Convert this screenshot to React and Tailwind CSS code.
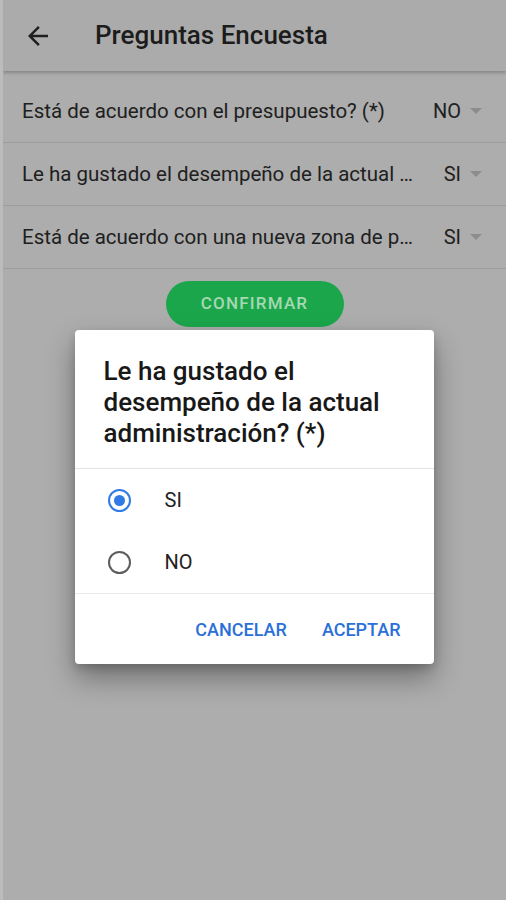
import React from 'react';

const rows = [
  { q: 'Está de acuerdo con el presupuesto? (*)', v: 'NO' },
  { q: 'Le ha gustado el desempeño de la actual administración? (*)', v: 'SI' },
  { q: 'Está de acuerdo con una nueva zona de parqueo? (*)', v: 'SI' },
];

const Caret = () => (
  <svg width="12" height="6" viewBox="0 0 12 6" className="shrink-0">
    <path d="M0 0h12L6 6z" fill="#8c8c8c" />
  </svg>
);

const Radio = ({ checked }) => (
  <span
    className={
      checked
        ? 'w-[23px] h-[23px] rounded-full border-[2.5px] border-[#2f7ae5] flex items-center justify-center'
        : 'w-[23px] h-[23px] rounded-full border-[2.5px] border-[#5c5c5c] flex items-center justify-center'
    }
  >
    {checked && <span className="w-[11px] h-[11px] rounded-full bg-[#2f7ae5]" />}
  </span>
);

export default function App() {
  return (
    <div className="relative w-[506px] h-[900px] bg-[#adadad] overflow-hidden font-['Roboto',sans-serif] border-l-[3px] border-l-[#bcbcbc]">
      {/* app bar */}
      <header className="h-[71px] bg-[#ababab] flex items-center shadow-[0_2px_3px_rgba(0,0,0,0.22)]">
        <svg width="30" height="30" viewBox="0 0 24 24" className="ml-[20px] shrink-0">
          <path d="M20 11H7.83l5.59-5.59L12 4l-8 8 8 8 1.41-1.41L7.83 13H20v-2z" fill="#1e1e1e" />
        </svg>
        <h1 className="ml-[42px] text-[26px] font-medium text-[#1c1c1c]">Preguntas Encuesta</h1>
      </header>

      <main className="pt-[9px]">
        {rows.map((r) => (
          <div key={r.q} className="h-[63px] flex items-center pl-[19px] pr-[24px] border-b border-[#9d9d9d]">
            <span className="flex-1 min-w-0 truncate text-[20.5px] text-[#202020]">{r.q}</span>
            <span className="w-[58px] ml-[8px] flex items-center justify-end gap-[9px]">
              <span className="text-[20px] text-[#202020]">{r.v}</span>
              <Caret />
            </span>
          </div>
        ))}
        <div className="flex justify-center pt-[12px]">
          <button className="w-[178px] h-[46px] rounded-full bg-[#1ba64c] text-[17px] font-medium tracking-[1.2px] text-[#a6d8b1]">
            CONFIRMAR
          </button>
        </div>
      </main>

      {/* modal layer */}
      <div className="absolute inset-0 flex justify-center pt-[330px] pr-[1px]">
        <div className="w-[359px] h-[334px] bg-white rounded-[4px] shadow-[0_14px_28px_rgba(0,0,0,0.35),0_4px_8px_rgba(0,0,0,0.15)] flex flex-col">
          <div className="pt-[26px] pb-[19px] pl-[29px] pr-[24px] text-[26px] leading-[31px] font-medium text-[#181818]">
            Le ha gustado el desempeño de la actual administración? (*)
          </div>
          <div className="h-px bg-[#e3e3e3]" />
          <div className="flex flex-col">
            <label className="h-[62px] flex items-center pl-[33px]">
              <Radio checked />
              <span className="ml-[34px] text-[20px] text-[#222]">SI</span>
            </label>
            <label className="h-[62px] flex items-center pl-[33px]">
              <Radio />
              <span className="ml-[34px] text-[20px] text-[#222]">NO</span>
            </label>
          </div>
          <div className="h-px bg-[#e9e9e9]" />
          <div className="flex-1 flex items-center justify-end pr-[33px] gap-[35px]">
            <button className="text-[18px] font-medium text-[#2b70d8]">CANCELAR</button>
            <button className="text-[18px] font-medium text-[#2b70d8]">ACEPTAR</button>
          </div>
        </div>
      </div>
    </div>
  );
}
